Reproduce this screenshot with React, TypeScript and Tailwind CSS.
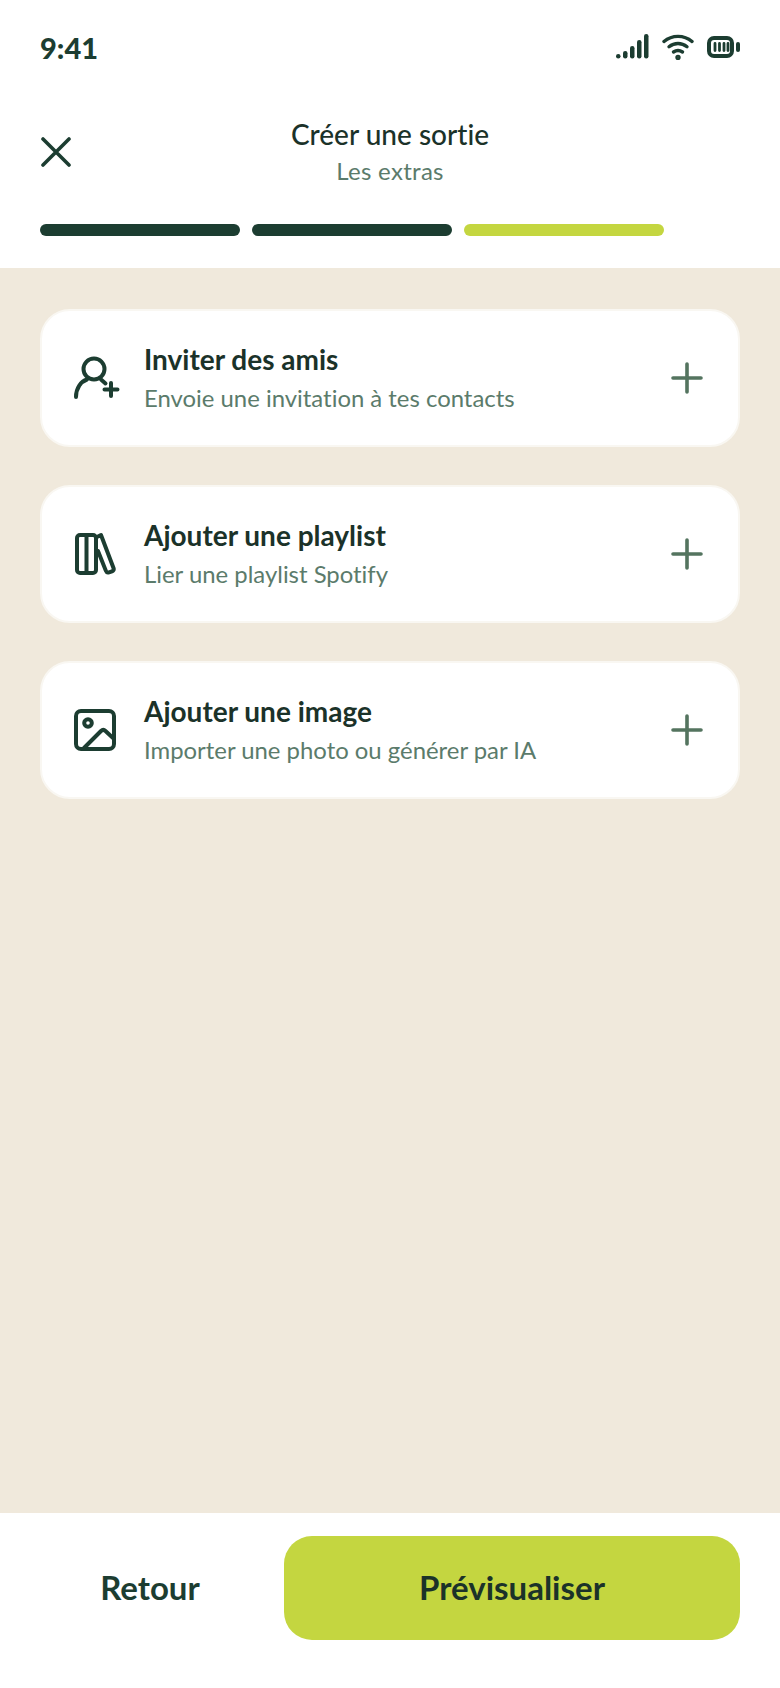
const FONT = "font-['Lato','Noto_Sans',sans-serif] [font-variant-ligatures:none]";

function PersonPlusIcon() {
  return (
    <svg width="46" height="44" viewBox="0 0 46 44" fill="none" stroke="#1c3d31" strokeWidth="4" strokeLinecap="round" strokeLinejoin="round">
      <circle cx="20" cy="13" r="10.500" />
      <path d="M2 41c0-9 5-15.500 11-17.500" />
      <path d="M27 23.500l4.500 4" />
      <path d="M37 27v13M30.500 33.500h13" />
    </svg>
  );
}

function BooksIcon() {
  return (
    <svg width="42" height="44" viewBox="0 0 42 44" fill="none" stroke="#1c3d31" strokeWidth="4" strokeLinecap="round" strokeLinejoin="round">
      <rect x="3" y="3" width="19" height="38" rx="3" />
      <path d="M12.500 3v38" />
      <path d="M24 4.500l3-1.500 12.500 33c.5 1.500-.2 2.800-1.500 3.300l-3 1.100c-1.300.4-2.600-.2-3.100-1.500L24 19" />
    </svg>
  );
}

function ImageIcon() {
  return (
    <svg width="42" height="42" viewBox="0 0 42 42" fill="none" stroke="#1c3d31" strokeWidth="4" strokeLinecap="round" strokeLinejoin="round">
      <rect x="2" y="2" width="38" height="38" rx="5" />
      <circle cx="14" cy="14" r="3.800" />
      <path d="M10 39l17-17c1.500-1.400 3-1.400 4.500 0L39 29" />
    </svg>
  );
}

function PlusIcon() {
  return (
    <svg width="32" height="32" viewBox="0 0 32 32" fill="none" stroke="#54745f" strokeWidth="3.600" strokeLinecap="round">
      <path d="M16 2v28M2 16h28" />
    </svg>
  );
}

function StatusIcons() {
  return (
    <div className="flex items-center gap-[13px]">
      <svg width="33" height="26" viewBox="0 0 33 26" fill="#1c3d31">
        <rect x="0" y="20" width="4.500" height="4.500" rx="2.200" />
        <rect x="7" y="17" width="4.500" height="7.500" rx="2.200" />
        <rect x="14" y="12" width="4.500" height="12.500" rx="2.200" />
        <rect x="21" y="6" width="4.500" height="18.500" rx="2.200" />
        <rect x="28" y="0" width="4.500" height="24.500" rx="2.200" />
      </svg>
      <svg width="32" height="26" viewBox="0 0 32 26" fill="none" stroke="#1c3d31" strokeWidth="3.400" strokeLinecap="round">
        <path d="M2 7.500c8-6.800 20-6.800 28 0" />
        <path d="M7 12.800c5.400-4.400 12.600-4.400 18 0" />
        <path d="M11.500 18c2.700-1.900 6.300-1.900 9 0" />
        <circle cx="16" cy="23.500" r="1" fill="#1c3d31" />
      </svg>
      <svg width="33" height="22" viewBox="0 0 33 22" fill="none">
        <rect x="2" y="2" width="23" height="18" rx="5" stroke="#1c3d31" strokeWidth="4" />
        <path d="M8 7.500v7M12.500 7.500v7M17 7.500v7M21 7.500v7" stroke="#1c3d31" strokeWidth="2.800" strokeLinecap="round" />
        <rect x="29" y="6" width="4" height="10" rx="2" fill="#1c3d31" />
      </svg>
    </div>
  );
}

const ITEMS = [
  { title: "Inviter des amis", sub: "Envoie une invitation à tes contacts", icon: <PersonPlusIcon /> },
  { title: "Ajouter une playlist", sub: "Lier une playlist Spotify", icon: <BooksIcon /> },
  { title: "Ajouter une image", sub: "Importer une photo ou générer par IA", icon: <ImageIcon /> },
];

export default function App() {
  return (
    <div className={`${FONT} flex h-[1688px] w-[780px] flex-col bg-white text-[#1c3d31]`}>
      {/* Status bar */}
      <div className="flex h-[96px] items-start justify-between px-[40px] pt-[30px]">
        <span className="text-[29px] font-black leading-[36px]">9:41</span>
        <div className="pt-[4px]">
          <StatusIcons />
        </div>
      </div>

      {/* Header */}
      <div className="flex h-[172px] shrink-0 flex-col px-[40px]">
        <div className="relative flex h-[128px] flex-col items-center pt-[21px]">
          <svg className="absolute left-[1px] top-[41px]" width="30" height="30" viewBox="0 0 30 30" fill="none" stroke="#1c3d31" strokeWidth="3.600" strokeLinecap="round">
            <path d="M2 2l26 26M28 2L2 28" />
          </svg>
          <span className="text-[28px] font-medium leading-[34px] text-[#1b3229]">Créer une sortie</span>
          <span className="mt-[5px] text-[24px] leading-[30px] tracking-[0.3px] text-[#5b7b6b]">Les extras</span>
        </div>
        <div className="flex gap-[12px]">
          <div className="h-[12px] w-[200px] rounded-[6px] bg-[#1c3d31]" />
          <div className="h-[12px] w-[200px] rounded-[6px] bg-[#1c3d31]" />
          <div className="h-[12px] w-[200px] rounded-[6px] bg-[#c4d640]" />
        </div>
      </div>

      {/* Options */}
      <div className="flex flex-1 flex-col gap-[38px] bg-[#f0e9dc] px-[40px] pt-[41px]">
        {ITEMS.map((item) => (
          <div key={item.title} className="flex h-[138px] items-center rounded-[30px] border-2 border-[#f9f7f2] bg-white pl-[32px] pr-[35px]">
            <div className="flex w-[70px] shrink-0 items-center">{item.icon}</div>
            <div className="flex flex-1 flex-col">
              <span className="text-[28px] font-bold leading-[32px] text-[#1b3229]">{item.title}</span>
              <span className="mt-[8px] text-[23.900px] leading-[30px] text-[#5b7b6b]">{item.sub}</span>
            </div>
            <PlusIcon />
          </div>
        ))}
      </div>

      {/* Footer */}
      <div className="flex h-[175px] shrink-0 gap-[24px] px-[40px] pt-[23px]">
        <button className="h-[104px] w-[220px] text-[33px] font-bold">Retour</button>
        <button className="h-[104px] flex-1 rounded-[28px] bg-[#c4d640] text-[33px] font-bold text-[#1b3229]">Prévisualiser</button>
      </div>
    </div>
  );
}
